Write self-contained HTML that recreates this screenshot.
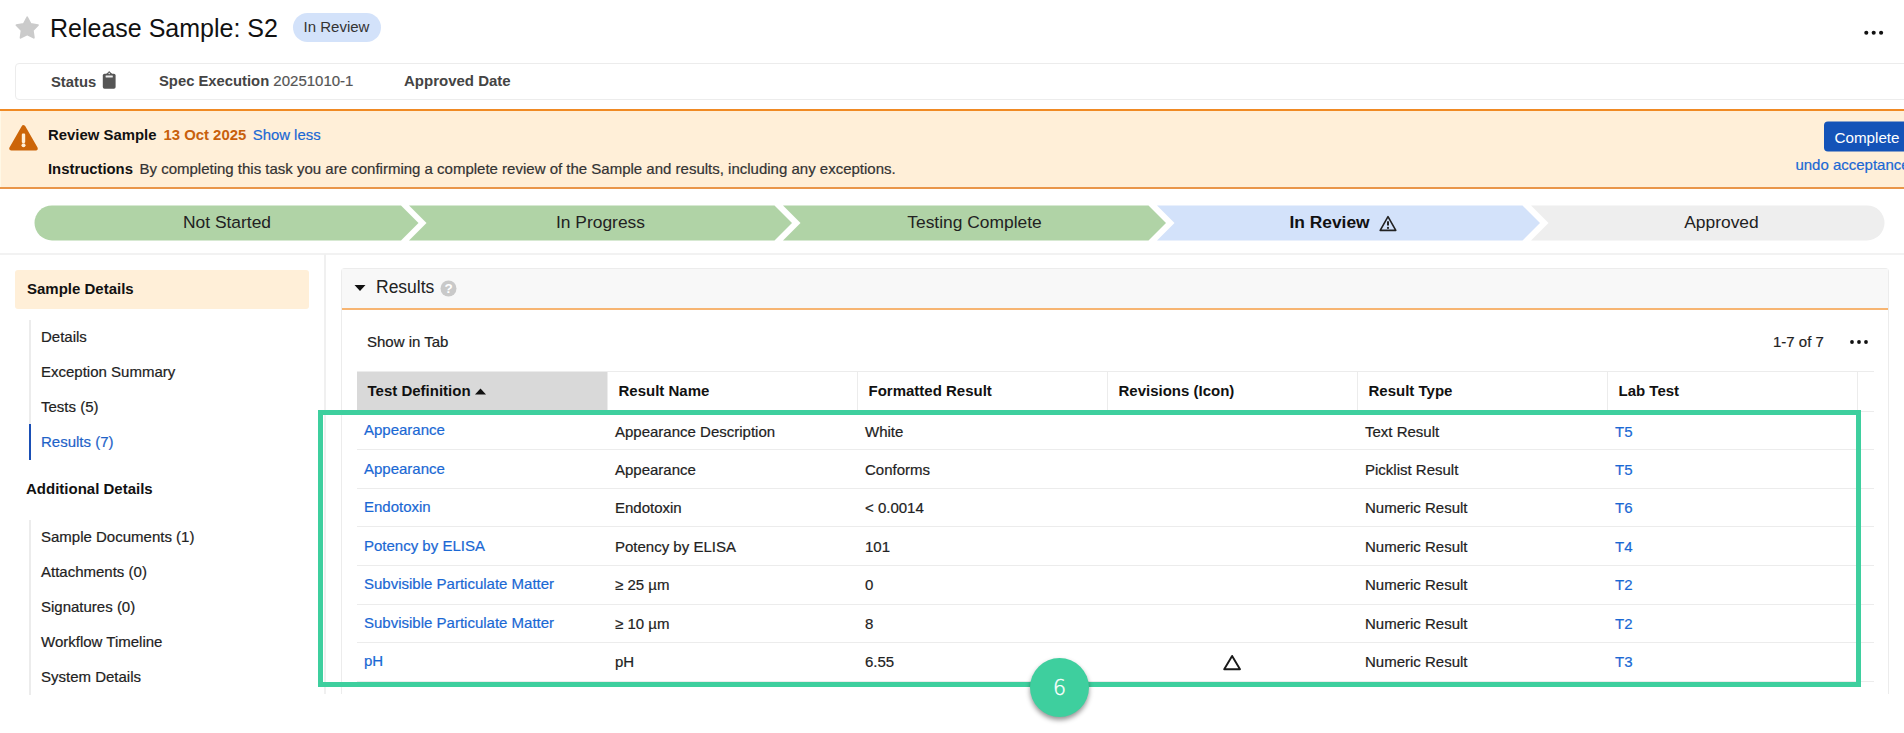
<!DOCTYPE html>
<html><head><meta charset="utf-8">
<style>
*{box-sizing:border-box;margin:0;padding:0}
html,body{width:1904px;height:733px;overflow:hidden;background:#fff}
body{font-family:"Liberation Sans",Arial,sans-serif;color:#222;font-size:15px;position:relative}
.abs{position:absolute;white-space:nowrap}
.b{font-weight:bold}
.t{position:absolute;white-space:nowrap;line-height:20px;height:20px;-webkit-text-stroke:0.2px}
.t.b,.t .b{-webkit-text-stroke:0}
a,.lnk{color:#1a68d4;text-decoration:none}
#title{left:50px;top:11.5px;font-size:25px;line-height:32px;color:#111}
#badge{left:292.5px;top:12.5px;width:88px;height:29.5px;border-radius:15px;background:#d3e2fa;font-size:15px;line-height:27.5px;text-align:center;color:#333}
#statusbar{left:15px;top:62.5px;width:1900px;height:37px;border:1px solid #ececec;border-radius:4px;background:#fff}
#banner{left:0;top:109px;width:1904px;height:80px;background:#ffefd8;border-top:2px solid #f08a24;border-bottom:2px solid #e9964a}
#complete{left:1823.5px;top:121px;width:90px;height:30px;transform:translateY(0.5px);border-radius:4px;background:#1453b8;color:#fff;font-size:15.2px;line-height:32px;padding-left:11px}
.side{left:41px;color:#222}
.row{position:absolute;left:357px;width:1515px;height:38.5px;border-bottom:1px solid #ececec}
.c{position:absolute;top:0;line-height:40px;white-space:nowrap}
.c.lnk{line-height:38px}
.th{position:absolute;top:372px;height:39px;line-height:38px;font-weight:bold;padding-left:10.5px;border-left:1px solid #ececec;color:#111;white-space:nowrap}
</style></head><body>

<!-- header -->
<svg class="abs" style="left:0;top:0" width="60" height="50" viewBox="0 0 60 50"><path d="M27.20 17.30L30.67 23.83L37.95 25.11L32.81 30.42L33.84 37.74L27.20 34.50L20.56 37.74L21.59 30.42L16.45 25.11L23.73 23.83z" fill="#cbcbcb" stroke="#cbcbcb" stroke-width="1.8" stroke-linejoin="round"/></svg>
<div class="abs" id="title">Release Sample: S2</div>
<div class="abs" id="badge">In Review</div>
<svg class="abs" style="left:1860px;top:26px" width="30" height="14"><circle cx="6.3" cy="6.7" r="2.05" fill="#111"/><circle cx="13.7" cy="6.7" r="2.05" fill="#111"/><circle cx="21.1" cy="6.7" r="2.05" fill="#111"/></svg>

<div class="abs" id="statusbar"></div>
<div class="t b" style="left:51px;top:72px;color:#444;font-size:14.8px">Status</div>
<svg class="abs" style="left:102px;top:71px" width="15" height="19" viewBox="0 0 15 19"><path d="M4.6 3.2L7.2 0.5L9.8 3.2z" fill="#555" stroke="#555" stroke-width="0.8" stroke-linejoin="round"/><rect x="0.8" y="2.7" width="12.8" height="15.1" rx="1.7" fill="#555"/><circle cx="7.2" cy="2.6" r="0.75" fill="#eee"/><rect x="3.6" y="4.6" width="7.2" height="1.8" rx="0.3" fill="#ececec"/></svg>
<div class="t" style="left:159px;top:71px;color:#555"><span class="b" style="color:#444;font-size:14.8px">Spec Execution</span> 20251010-1</div>
<div class="t b" style="left:404px;top:71px;color:#444">Approved Date</div>

<!-- banner -->
<div class="abs" id="banner"></div>
<div class="abs" style="left:0;top:111px;width:1px;height:76px;background:#fff8e6"></div>
<svg class="abs" style="left:0;top:115px" width="50" height="45" viewBox="0 0 50 45"><path d="M23.5 12.3L35.7 33.5H11.3z" fill="#cc6508" stroke="#cc6508" stroke-width="4.2" stroke-linejoin="round"/><rect x="21.8" y="18.6" width="3.4" height="9.4" rx="1.1" fill="#ffefd8"/><circle cx="23.5" cy="30.2" r="2" fill="#ffefd8"/></svg>
<div class="t" style="left:48px;top:125px"><span class="b" style="color:#111;font-size:14.9px">Review Sample</span><span class="b" style="color:#c8600c;margin-left:7px;font-size:14.9px">13 Oct 2025</span><span class="lnk" style="margin-left:6.5px;font-size:14.9px">Show less</span></div>
<div class="t" style="left:48px;top:159.4px;color:#333"><span class="b" style="color:#111;font-size:14.85px">Instructions</span><span style="margin-left:6.5px">By completing this task you are confirming a complete review of the Sample and results, including any exceptions.</span></div>
<div class="abs" id="complete">Complete</div>
<div class="t lnk" style="left:1795.4px;top:154.7px">undo acceptance</div>

<!-- chevrons -->
<svg class="abs" style="left:0;top:205px" width="1904" height="37" viewBox="0 0 1904 37"><g transform="translate(0,0.4)">
<path d="M52 0H401L418.500 17.500L401 35H52A17.500 17.500 0 0 1 52 0z" fill="#b0d3a6"/>
<path d="M409 0H774.500L792 17.500L774.500 35H409L426.500 17.500z" fill="#b0d3a6"/>
<path d="M783 0H1148.500L1166 17.500L1148.500 35H783L800.500 17.500z" fill="#b0d3a6"/>
<path d="M1157 0H1522.500L1540 17.500L1522.500 35H1157L1174.500 17.500z" fill="#d3e2fa"/>
<path d="M1531 0H1867A17.500 17.500 0 0 1 1867 35H1531L1548.500 17.500z" fill="#eeeeee"/>
<g font-family="Liberation Sans, Arial, sans-serif" font-size="17.4" fill="#222" text-anchor="middle">
<text x="227" y="22.9">Not Started</text>
<text x="600.500" y="22.9">In Progress</text>
<text x="974.500" y="22.9">Testing Complete</text>
<text x="1329.500" y="22.9" font-weight="bold" fill="#111">In Review</text>
<text x="1721.500" y="22.9">Approved</text>
</g>
<g transform="translate(1379.2,9.6)" fill="none" stroke="#222" stroke-width="1.6" stroke-linejoin="round"><path d="M8.8 1.6L16.6 15.4H1z"/><path d="M8.8 6.3v4.2" stroke-width="2"/><circle cx="8.800" cy="12.900" r="1.100" fill="#222" stroke="none"/></g>
</g></svg>

<!-- layout lines -->
<div class="abs" style="left:0;top:253px;width:1904px;height:2px;background:#f2f2f2"></div>
<div class="abs" style="left:324px;top:254px;width:2px;height:440px;background:#f0f0f0"></div>

<!-- sidebar -->
<div class="abs" style="left:15px;top:270px;width:294px;height:39px;background:#ffefd8;border-radius:3px"></div>
<div class="t b" style="left:27px;top:279px;color:#111">Sample Details</div>
<div class="abs" style="left:29px;top:320px;width:2px;height:140px;background:#ececec"></div>
<div class="abs" style="left:29px;top:424px;width:2px;height:36px;background:#1a4fb5"></div>
<div class="t side" style="top:327px">Details</div>
<div class="t side" style="top:362px">Exception Summary</div>
<div class="t side" style="top:397px">Tests (5)</div>
<div class="t side lnk" style="top:432px;color:#1f63c8">Results (7)</div>
<div class="t b" style="left:26px;top:479px;color:#111">Additional Details</div>
<div class="abs" style="left:29px;top:520px;width:2px;height:175px;background:#ececec"></div>
<div class="t side" style="top:527px">Sample Documents (1)</div>
<div class="t side" style="top:562px">Attachments (0)</div>
<div class="t side" style="top:597px">Signatures (0)</div>
<div class="t side" style="top:632px">Workflow Timeline</div>
<div class="t side" style="top:667px">System Details</div>

<!-- results panel -->
<div class="abs" style="left:341px;top:268px;width:1548px;height:440px;border:1px solid #ececec;border-bottom:none;border-radius:4px 4px 0 0"></div>
<div class="abs" style="left:342px;top:269px;width:1546px;height:39px;background:#f8f8f8"></div>
<div class="abs" style="left:342px;top:308px;width:1546px;height:2px;background:#f7b572"></div>
<div class="abs" style="left:341px;top:694px;width:1549px;height:40px;background:#fff"></div>
<svg class="abs" style="left:354px;top:284px" width="12" height="8"><path d="M0.500 1h11L6 7z" fill="#111"/></svg>
<div class="abs" style="left:376px;top:275px;font-size:17.5px;line-height:24px;color:#222">Results</div>
<svg class="abs" style="left:440px;top:280px" width="17" height="17" viewBox="0 0 17 17"><circle cx="8.500" cy="8.500" r="8" fill="#c9c9c9"/><text x="8.500" y="13.3" font-size="13.5" font-weight="bold" text-anchor="middle" fill="#fff" font-family="Liberation Sans, Arial, sans-serif">?</text></svg>
<div class="t" style="left:367px;top:332px;color:#222">Show in Tab</div>
<div class="t" style="left:1773px;top:332px;color:#222">1-7 of 7</div>
<svg class="abs" style="left:1849px;top:339px" width="20" height="6"><circle cx="3" cy="3" r="1.900" fill="#111"/><circle cx="10" cy="3" r="1.900" fill="#111"/><circle cx="17" cy="3" r="1.900" fill="#111"/></svg>

<!-- table header -->
<div class="abs" style="left:357px;top:371px;width:1517px;height:1px;background:#ececec"></div>
<div class="abs" style="left:357px;top:411px;width:1517px;height:1px;background:#ececec"></div>
<div class="th" style="left:357px;width:250px;background:#d9d9d9;border-left:none">Test Definition <svg width="11" height="7" style="vertical-align:1px"><path d="M0 6.500h11L5.500 0.500z" fill="#111"/></svg></div>
<div class="th" style="left:607px;width:250px">Result Name</div>
<div class="th" style="left:857px;width:250px">Formatted Result</div>
<div class="th" style="left:1107px;width:250px">Revisions (Icon)</div>
<div class="th" style="left:1357px;width:250px">Result Type</div>
<div class="th" style="left:1607px;width:250px">Lab Test</div>
<div class="th" style="left:1857px;width:17px;padding:0"></div>

<!-- rows -->
<div class="abs" style="left:357px;top:449px;width:1517px;height:1px;background:#ececec"></div>
<div class="abs" style="left:357px;top:488px;width:1517px;height:1px;background:#ececec"></div>
<div class="abs" style="left:357px;top:526px;width:1517px;height:1px;background:#ececec"></div>
<div class="abs" style="left:357px;top:565px;width:1517px;height:1px;background:#ececec"></div>
<div class="abs" style="left:357px;top:604px;width:1517px;height:1px;background:#ececec"></div>
<div class="abs" style="left:357px;top:642px;width:1517px;height:1px;background:#ececec"></div>
<div class="abs" style="left:357px;top:681px;width:1517px;height:1px;background:#ececec"></div>
<div class="t lnk" style="left:364px;top:420px">Appearance</div><div class="t" style="left:615px;top:422px">Appearance Description</div><div class="t" style="left:865px;top:422px">White</div><div class="t" style="left:1365px;top:422px">Text Result</div><div class="t lnk" style="left:1615px;top:422px">T5</div>
<div class="t lnk" style="left:364px;top:459px">Appearance</div><div class="t" style="left:615px;top:460px">Appearance</div><div class="t" style="left:865px;top:460px">Conforms</div><div class="t" style="left:1365px;top:460px">Picklist Result</div><div class="t lnk" style="left:1615px;top:460px">T5</div>
<div class="t lnk" style="left:364px;top:497px">Endotoxin</div><div class="t" style="left:615px;top:498px">Endotoxin</div><div class="t" style="left:865px;top:498px">&lt; 0.0014</div><div class="t" style="left:1365px;top:498px">Numeric Result</div><div class="t lnk" style="left:1615px;top:498px">T6</div>
<div class="t lnk" style="left:364px;top:536px">Potency by ELISA</div><div class="t" style="left:615px;top:537px">Potency by ELISA</div><div class="t" style="left:865px;top:537px">101</div><div class="t" style="left:1365px;top:537px">Numeric Result</div><div class="t lnk" style="left:1615px;top:537px">T4</div>
<div class="t lnk" style="left:364px;top:574px">Subvisible Particulate Matter</div><div class="t" style="left:615px;top:575px">≥ 25 µm</div><div class="t" style="left:865px;top:575px">0</div><div class="t" style="left:1365px;top:575px">Numeric Result</div><div class="t lnk" style="left:1615px;top:575px">T2</div>
<div class="t lnk" style="left:364px;top:613px">Subvisible Particulate Matter</div><div class="t" style="left:615px;top:614px">≥ 10 µm</div><div class="t" style="left:865px;top:614px">8</div><div class="t" style="left:1365px;top:614px">Numeric Result</div><div class="t lnk" style="left:1615px;top:614px">T2</div>
<div class="t lnk" style="left:364px;top:651px">pH</div><div class="t" style="left:615px;top:652px">pH</div><div class="t" style="left:865px;top:652px">6.55</div><div class="t" style="left:1365px;top:652px">Numeric Result</div><div class="t lnk" style="left:1615px;top:652px">T3</div>
<svg class="abs" style="left:1215px;top:648px" width="34" height="30" viewBox="0 0 34 30"><path d="M17.1 7.900L25 21.300H9.200z" fill="none" stroke="#1a1a1a" stroke-width="1.900" stroke-linejoin="round"/></svg>

<!-- highlight -->
<div class="abs" style="left:318px;top:410px;width:1543px;height:277px;border:5px solid #3ecf9e"></div>
<div class="abs" style="left:1030px;top:658px;width:59px;height:59px;border-radius:50%;background:#3ecf9e;box-shadow:0 3px 5px rgba(0,0,0,.42);color:#fff;font-size:20.5px;line-height:61px;text-align:center;font-family:'DejaVu Sans Light','DejaVu Sans','Liberation Sans',sans-serif;font-weight:200;-webkit-text-stroke:0.4px #fff">6</div>

</body></html>
